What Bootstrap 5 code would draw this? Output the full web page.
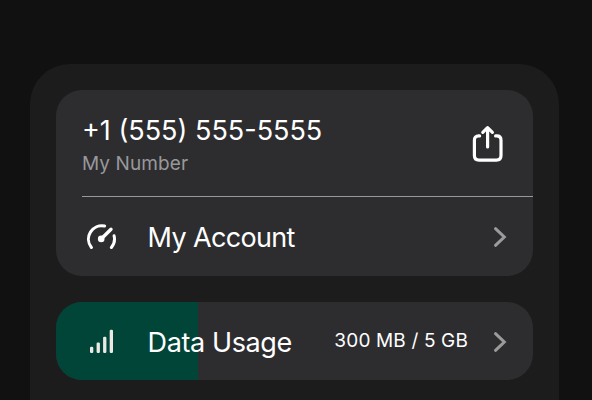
<!DOCTYPE html>
<html lang="en" data-bs-theme="dark">
<head>
<meta charset="utf-8">
<meta name="viewport" content="width=device-width, initial-scale=1">
<title>Account</title>
<link href="https://cdn.jsdelivr.net/npm/bootstrap@5.3.0/dist/css/bootstrap.min.css" rel="stylesheet">
<style>
body{background:#111;font-family:Inter,"Liberation Sans",sans-serif;color:#fff;height:400px;padding:64px 33px 0 30px}
.sheet{background:#1c1c1c;border-radius:40px 40px 0 0;padding:26px 26px 0;height:336px}
.panel{background:#2d2d2f;border-radius:26px}
.number-panel{height:186px}
.number-row{height:106px;padding:0 30px 0 26px}
.number-row .phone{font-size:27px;line-height:32px;letter-spacing:0;margin-top:25px}
.number-row .caption{font-size:19px;line-height:24px;letter-spacing:.1px;color:#98989b;margin-top:5px}
.number-row svg{margin-top:34px}
.rule{height:1px;background:#98989c;margin-left:26px}
.line-item{padding:0 26px 0 30px}
.account-row{height:79px}
.usage-row{height:78px;margin-top:26.4px}
.usage-row .line-item{padding-top:1px}
.usage-row .progress-bar{background:#004538}
.title{font-size:27px;line-height:34px;margin-left:30.6px;margin-top:2px}
.account-row .title{letter-spacing:-.65px}
.usage-row .title{letter-spacing:-.4px}
.amount{font-size:19px;line-height:24px;letter-spacing:.15px;margin-right:25px;margin-top:-1px}
</style>
<script src="https://cdn.jsdelivr.net/npm/bootstrap@5.3.0/dist/js/bootstrap.bundle.min.js"></script>
</head>
<body class="overflow-hidden">
<main class="sheet">
  <section class="panel number-panel overflow-hidden">
    <div class="number-row d-flex justify-content-between align-items-start">
      <div class="text-nowrap">
        <div class="phone">+1 (555) 555-5555</div>
        <div class="caption">My Number</div>
      </div>
      <svg width="31" height="38" viewBox="0 0 31 38" fill="none" stroke="#fff" stroke-width="3.2" stroke-linecap="round" stroke-linejoin="round"><path d="M7.6 11.9H6.5C3.8 11.9 2.4 13.5 2.4 16.2V31.6C2.4 34.6 4 36.2 7 36.2H24.4C27.4 36.2 29 34.6 29 31.6V16.2C29 13.5 27.4 11.9 24.7 11.9H23.6M15.6 23V4M10.8 8.4L15.6 3.6L20.4 8.4"/></svg>
    </div>
    <div class="rule"></div>
    <div class="line-item account-row d-flex align-items-center">
      <svg width="31" height="28" viewBox="0 0 31 28" fill="none" stroke="#fff" stroke-width="3" stroke-linecap="round"><path d="M5.4 24.5A13.4 13.4 0 0 1 18.6 3M28.1 12.8A13.4 13.4 0 0 1 25.4 24.5"/><path d="M15.4 15.8L25 6.2" stroke-width="3.4"/><circle cx="15.2" cy="15.9" r="3.3" fill="#fff" stroke="none"/></svg>
      <div class="title text-nowrap">My Account</div>
      <svg class="ms-auto" width="14" height="22" viewBox="0 0 14 22" fill="none" stroke="#9b9b9b" stroke-width="3" stroke-linecap="round" stroke-linejoin="miter"><path d="M2.5 2.7L11.3 11L2.5 19.3"/></svg>
    </div>
  </section>
  <section class="panel usage-row position-relative overflow-hidden">
    <div class="progress-bar position-absolute top-0 start-0 h-100" style="width:29.7%"></div>
    <div class="line-item position-relative h-100 d-flex align-items-center">
      <svg width="31" height="28" viewBox="0 0 31 28" fill="#ebe9e4"><rect x="4" y="18.7" width="3.3" height="6.3" rx="1.2"/><rect x="10.6" y="14.5" width="3.3" height="10.5" rx="1.2"/><rect x="17.1" y="8.8" width="3.3" height="16.2" rx="1.2"/><rect x="23.7" y="1.8" width="3.3" height="23.2" rx="1.2"/></svg>
      <div class="title text-nowrap">Data Usage</div>
      <div class="amount ms-auto text-nowrap">300 MB / 5 GB</div>
      <svg width="14" height="22" viewBox="0 0 14 22" fill="none" stroke="#9b9b9b" stroke-width="3" stroke-linecap="round"><path d="M2.5 2.7L11.3 11L2.5 19.3"/></svg>
    </div>
  </section>
</main>
</body>
</html>
